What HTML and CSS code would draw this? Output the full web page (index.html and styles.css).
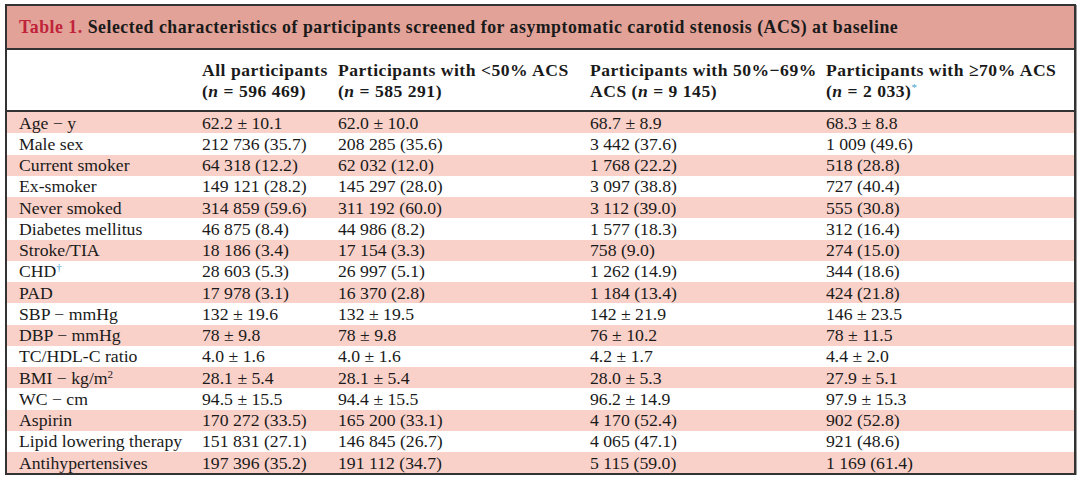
FILE: index.html
```html
<!DOCTYPE html>
<html>
<head>
<meta charset="utf-8">
<link rel="stylesheet" href="styles.css">
</head>
<body>
<div class="frame">
  <div class="caption"><span class="lbl">Table 1.</span> Selected characteristics of participants screened for asymptomatic carotid stenosis (ACS) at baseline</div>
  <table class="data">
    <colgroup>
      <col class="c0"><col class="c1"><col class="c2"><col class="c3"><col class="c4">
    </colgroup>
    <thead>
      <tr>
        <th></th>
        <th>All participants<br>(<i>n</i>&nbsp;=&nbsp;596 469)</th>
        <th>Participants with &lt;50% ACS<br>(<i>n</i>&nbsp;=&nbsp;585 291)</th>
        <th>Participants with 50%−69%<br>ACS (<i>n</i>&nbsp;=&nbsp;9 145)</th>
        <th>Participants with ≥70% ACS<br>(<i>n</i>&nbsp;=&nbsp;2 033)<sup class="fn">*</sup></th>
      </tr>
    </thead>
    <tbody>
      <tr class="odd"><td>Age − y</td><td>62.2 ± 10.1</td><td>62.0 ± 10.0</td><td>68.7 ± 8.9</td><td>68.3 ± 8.8</td></tr>
      <tr><td>Male sex</td><td>212 736 (35.7)</td><td>208 285 (35.6)</td><td>3 442 (37.6)</td><td>1 009 (49.6)</td></tr>
      <tr class="odd"><td>Current smoker</td><td>64 318 (12.2)</td><td>62 032 (12.0)</td><td>1 768 (22.2)</td><td>518 (28.8)</td></tr>
      <tr><td>Ex-smoker</td><td>149 121 (28.2)</td><td>145 297 (28.0)</td><td>3 097 (38.8)</td><td>727 (40.4)</td></tr>
      <tr class="odd"><td>Never smoked</td><td>314 859 (59.6)</td><td>311 192 (60.0)</td><td>3 112 (39.0)</td><td>555 (30.8)</td></tr>
      <tr><td>Diabetes mellitus</td><td>46 875 (8.4)</td><td>44 986 (8.2)</td><td>1 577 (18.3)</td><td>312 (16.4)</td></tr>
      <tr class="odd"><td>Stroke/TIA</td><td>18 186 (3.4)</td><td>17 154 (3.3)</td><td>758 (9.0)</td><td>274 (15.0)</td></tr>
      <tr><td>CHD<sup class="fn">†</sup></td><td>28 603 (5.3)</td><td>26 997 (5.1)</td><td>1 262 (14.9)</td><td>344 (18.6)</td></tr>
      <tr class="odd"><td>PAD</td><td>17 978 (3.1)</td><td>16 370 (2.8)</td><td>1 184 (13.4)</td><td>424 (21.8)</td></tr>
      <tr><td>SBP − mmHg</td><td>132 ± 19.6</td><td>132 ± 19.5</td><td>142 ± 21.9</td><td>146 ± 23.5</td></tr>
      <tr class="odd"><td>DBP − mmHg</td><td>78 ± 9.8</td><td>78 ± 9.8</td><td>76 ± 10.2</td><td>78 ± 11.5</td></tr>
      <tr><td>TC/HDL-C ratio</td><td>4.0 ± 1.6</td><td>4.0 ± 1.6</td><td>4.2 ± 1.7</td><td>4.4 ± 2.0</td></tr>
      <tr class="odd"><td>BMI − kg/m<sup>2</sup></td><td>28.1 ± 5.4</td><td>28.1 ± 5.4</td><td>28.0 ± 5.3</td><td>27.9 ± 5.1</td></tr>
      <tr><td>WC − cm</td><td>94.5 ± 15.5</td><td>94.4 ± 15.5</td><td>96.2 ± 14.9</td><td>97.9 ± 15.3</td></tr>
      <tr class="odd"><td>Aspirin</td><td>170 272 (33.5)</td><td>165 200 (33.1)</td><td>4 170 (52.4)</td><td>902 (52.8)</td></tr>
      <tr><td>Lipid lowering therapy</td><td>151 831 (27.1)</td><td>146 845 (26.7)</td><td>4 065 (47.1)</td><td>921 (48.6)</td></tr>
      <tr class="odd"><td>Antihypertensives</td><td>197 396 (35.2)</td><td>191 112 (34.7)</td><td>5 115 (59.0)</td><td>1 169 (61.4)</td></tr>
    </tbody>
  </table>
</div>
</body>
</html>
```

FILE: styles.css
```css
html, body {
  margin: 0;
  padding: 0;
  background: #ffffff;
}
body {
  padding: 4px 4px 0 5px;
  font-family: "Liberation Serif", "DejaVu Serif", serif;
  color: #1a1a1a;
}
.frame {
  width: 1067px;
  border: 2px solid #333333;
  box-shadow: 1px 1px 0 #9a9a9a;
}
.caption {
  background: #e2a298;
  height: 42px;
  line-height: 42px;
  padding-left: 12px;
  font-size: 17.8px;
  letter-spacing: 0.51px;
  font-weight: bold;
  border-bottom: 2px solid #333333;
  white-space: nowrap;
}
.caption .lbl {
  color: #c0233a;
}
.data {
  width: 100%;
  border-collapse: collapse;
  table-layout: fixed;
  font-size: 17.7px;
}
.c0 { width: 195px; }
.c1 { width: 136px; }
.c2 { width: 252px; }
.c3 { width: 236px; }
.c4 { width: auto; }
.data th {
  text-align: left;
  font-weight: bold;
  vertical-align: top;
  padding: 10px 0 8px 0;
  line-height: 21px;
  font-size: 17.6px;
  letter-spacing: 0.5px;
  white-space: nowrap;
  border-bottom: 2px solid #333333;
}
.data td {
  padding: 0;
  height: 21.25px;
  line-height: 20px;
  white-space: nowrap;
}
.data td:first-child, .data th:first-child {
  padding-left: 12px;
}
.data tr.odd td {
  background: #f9d1c9;
}
.fn {
  color: #4aa6d0;
  font-size: 11px;
  font-weight: normal;
  vertical-align: 6px;
  line-height: 0;
}
sup {
  font-size: 11px;
  line-height: 0;
  vertical-align: 6px;
}
```
